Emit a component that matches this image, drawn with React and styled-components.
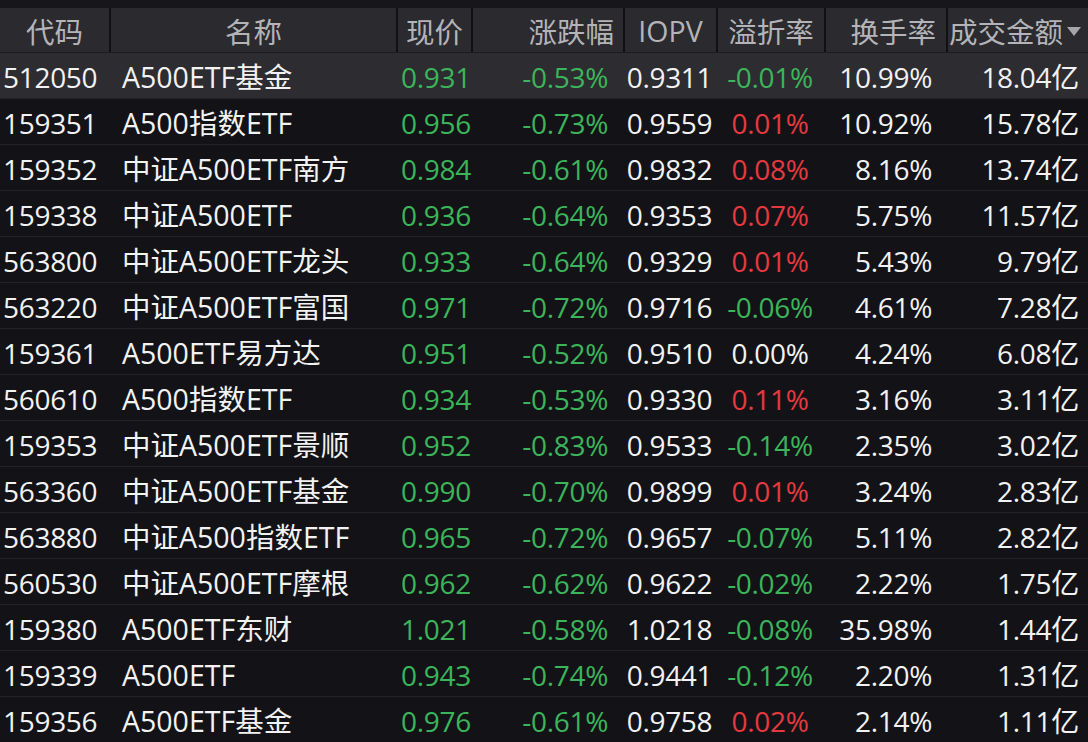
import React from "react";
import styled, { createGlobalStyle } from "styled-components";

const Global = createGlobalStyle`
  html, body { margin: 0; padding: 0; background: #131317; }
  body { font-family: "Open Sans", "Noto Sans CJK SC", sans-serif; }
`;

const COLS = "109px 287px 75px 152px 93px 108px 122px 142px";

const Page = styled.div`
  width: 1088px;
  height: 742px;
  overflow: hidden;
  background: #131317;
  border-top: 8px solid #17171b;
  box-sizing: border-box;
`;

const HeaderRow = styled.div`
  display: grid;
  grid-template-columns: ${COLS};
  height: 44px;
  background: #2a2a2f;
  border-bottom: 1px solid #1c1c20;
`;

const HeadCell = styled.div`
  display: flex;
  align-items: center;
  justify-content: ${(p) => p.$justify || "center"};
  padding: 3px ${(p) => p.$pr || 0}px 0 ${(p) => p.$pl || 0}px;
  border-left: ${(p) => (p.$first ? "none" : "2px solid #111114")};
  color: #b4b4b8;
  font-family: ${(p) =>
    p.$latin ? '"Open Sans", sans-serif' : '"Noto Sans CJK SC", sans-serif'};
  font-size: 28.5px;
  line-height: 1;
  white-space: nowrap;
  gap: 4px;
`;

const Row = styled.div`
  display: grid;
  grid-template-columns: ${COLS};
  height: 46px;
  box-sizing: border-box;
  background: ${(p) => (p.$active ? "#2c2c31" : "#131317")};
  border-bottom: 1px solid #232328;
`;

const Cell = styled.div`
  display: flex;
  align-items: center;
  justify-content: ${(p) => p.$justify || "flex-end"};
  padding: 3px ${(p) => p.$pr || 0}px 0 ${(p) => p.$pl || 0}px;
  color: ${(p) =>
    p.$tone === "up" ? "#e5393f" : p.$tone === "down" ? "#3cb55a" : "#f2f2f2"};
  font-size: ${(p) => (p.$name ? "28.5px" : "28px")};
  letter-spacing: ${(p) => (p.$name ? "0" : "-0.3px")};
  line-height: 1;
  white-space: nowrap;
  overflow: visible;
`;

const Triangle = styled.svg`
  width: 14px;
  height: 10px;
  flex: none;
`;

const data = [
  ["512050", "A500ETF基金", "0.931", "-0.53%", "0.9311", "-0.01%", "10.99%", "18.04亿"],
  ["159351", "A500指数ETF", "0.956", "-0.73%", "0.9559", "0.01%", "10.92%", "15.78亿"],
  ["159352", "中证A500ETF南方", "0.984", "-0.61%", "0.9832", "0.08%", "8.16%", "13.74亿"],
  ["159338", "中证A500ETF", "0.936", "-0.64%", "0.9353", "0.07%", "5.75%", "11.57亿"],
  ["563800", "中证A500ETF龙头", "0.933", "-0.64%", "0.9329", "0.01%", "5.43%", "9.79亿"],
  ["563220", "中证A500ETF富国", "0.971", "-0.72%", "0.9716", "-0.06%", "4.61%", "7.28亿"],
  ["159361", "A500ETF易方达", "0.951", "-0.52%", "0.9510", "0.00%", "4.24%", "6.08亿"],
  ["560610", "A500指数ETF", "0.934", "-0.53%", "0.9330", "0.11%", "3.16%", "3.11亿"],
  ["159353", "中证A500ETF景顺", "0.952", "-0.83%", "0.9533", "-0.14%", "2.35%", "3.02亿"],
  ["563360", "中证A500ETF基金", "0.990", "-0.70%", "0.9899", "0.01%", "3.24%", "2.83亿"],
  ["563880", "中证A500指数ETF", "0.965", "-0.72%", "0.9657", "-0.07%", "5.11%", "2.82亿"],
  ["560530", "中证A500ETF摩根", "0.962", "-0.62%", "0.9622", "-0.02%", "2.22%", "1.75亿"],
  ["159380", "A500ETF东财", "1.021", "-0.58%", "1.0218", "-0.08%", "35.98%", "1.44亿"],
  ["159339", "A500ETF", "0.943", "-0.74%", "0.9441", "-0.12%", "2.20%", "1.31亿"],
  ["159356", "A500ETF基金", "0.976", "-0.61%", "0.9758", "0.02%", "2.14%", "1.11亿"],
];

const toneOf = (v) => {
  if (v.startsWith("-")) return "down";
  if (v === "0.00%") return "flat";
  return "up";
};

export default function App() {
  return (
    <>
      <Global />
      <Page>
        <HeaderRow>
          <HeadCell $first>代码</HeadCell>
          <HeadCell>名称</HeadCell>
          <HeadCell>现价</HeadCell>
          <HeadCell $justify="flex-end" $pr={9}>涨跌幅</HeadCell>
          <HeadCell $latin>IOPV</HeadCell>
          <HeadCell>溢折率</HeadCell>
          <HeadCell $justify="flex-end" $pr={10}>换手率</HeadCell>
          <HeadCell $justify="flex-start" $pl={1}>
            成交金额
            <Triangle viewBox="0 0 14 10">
              <polygon points="0,0 14,0 7,9" fill="#a6a6aa" />
            </Triangle>
          </HeadCell>
        </HeaderRow>
        {data.map((r, i) => (
          <Row key={r[0] + i} $active={i === 0}>
            <Cell $justify="flex-start" $pl={3}>{r[0]}</Cell>
            <Cell $name $justify="flex-start" $pl={13}>{r[1]}</Cell>
            <Cell $tone="down" $justify="flex-end" $pr={0}>{r[2]}</Cell>
            <Cell $tone="down" $pr={15}>{r[3]}</Cell>
            <Cell $justify="center">{r[4]}</Cell>
            <Cell $tone={toneOf(r[5])} $justify="center">{r[5]}</Cell>
            <Cell $pr={14}>{r[6]}</Cell>
            <Cell $pr={9}>{r[7]}</Cell>
          </Row>
        ))}
      </Page>
    </>
  );
}
